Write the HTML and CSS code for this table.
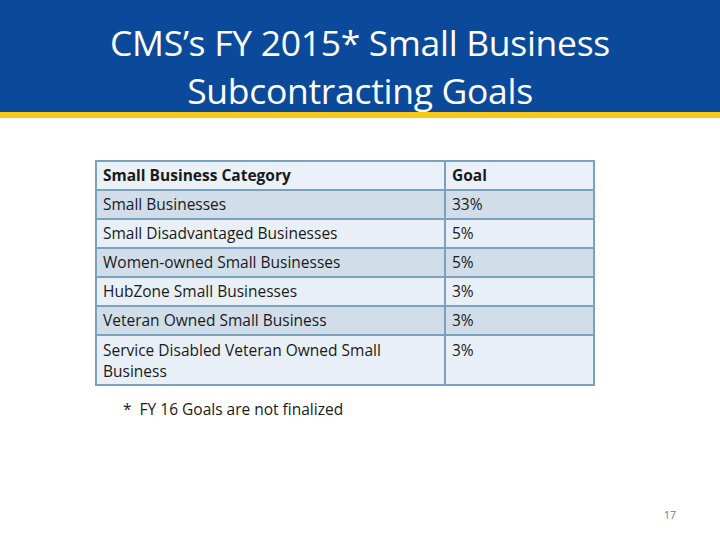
FILE: index.html
```html
<!DOCTYPE html>
<html>
<head>
<meta charset="utf-8">
<link rel="stylesheet" href="styles.css">
</head>
<body>
<div class="slide">
  <header class="banner">
    <h1 class="title">CMS’s FY 2015* Small Business<br>Subcontracting Goals</h1>
  </header>
  <div class="stripe"></div>
  <main class="content">
    <table class="goals">
      <tr class="head"><th>Small Business Category</th><th>Goal</th></tr>
      <tr class="dark"><td>Small Businesses</td><td>33%</td></tr>
      <tr class="light"><td>Small Disadvantaged Businesses</td><td>5%</td></tr>
      <tr class="dark"><td>Women-owned Small Businesses</td><td>5%</td></tr>
      <tr class="light"><td>HubZone Small Businesses</td><td>3%</td></tr>
      <tr class="dark"><td>Veteran Owned Small Business</td><td>3%</td></tr>
      <tr class="light tall"><td>Service Disabled Veteran Owned Small Business</td><td>3%</td></tr>
    </table>
    <p class="note">*&nbsp; FY 16 Goals are not finalized</p>
  </main>
  <div class="pagenum">17</div>
</div>
</body>
</html>
```
FILE: styles.css
```css
html, body {
  margin: 0;
  padding: 0;
  background: #ffffff;
}
.slide {
  width: 720px;
  height: 540px;
  position: relative;
  font-family: "Open Sans", "Liberation Sans", sans-serif;
  color: #1a1a1a;
}
.banner {
  height: 112px;
  background: #0b4a9b;
  display: flex;
  justify-content: center;
  align-items: flex-start;
}
.title {
  margin: 18px 0 0 0;
  font-weight: 400;
  font-size: 35.5px;
  line-height: 48px;
  color: #ffffff;
  text-align: center;
  letter-spacing: -0.3px;
}
.stripe {
  height: 6px;
  background: #f7c815;
}
.content {
  padding: 42px 0 0 95px;
}
.goals {
  border-collapse: collapse;
  width: 500px;
  font-size: 15.5px;
  border: 2px solid #7aa2bd;
}
.goals th, .goals td {
  border: 2px solid #7aa2bd;
  text-align: left;
  vertical-align: top;
  padding: 4px 6px 4px 6px;
  line-height: 19px;
}
.goals th {
  font-weight: 700;
}
.goals th:first-child, .goals td:first-child {
  width: 335px;
}
.head { background: #ebf1f8; }
.dark { background: #d1dee9; }
.light { background: #e9eff7; }
.tall td { padding-top: 4px; padding-bottom: 2px; line-height: 21px; }
.note {
  margin: 12px 0 0 28px;
  font-size: 15.5px;
}
.pagenum {
  position: absolute;
  left: 664px;
  top: 508px;
  font-size: 10.5px;
  color: #777;
}
```
